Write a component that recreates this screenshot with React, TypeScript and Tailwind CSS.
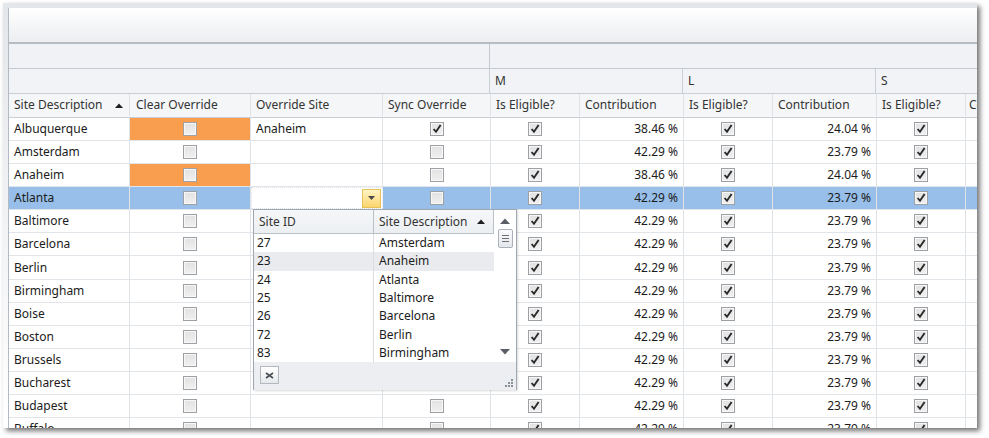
import { ReactNode } from 'react'

interface Row {
  site: string
  orange?: boolean
  override?: string
  sync?: boolean
  m: string
  l: string
}

const rows: Row[] = [
  { site: 'Albuquerque', orange: true, override: 'Anaheim', sync: true, m: '38.46 %', l: '24.04 %' },
  { site: 'Amsterdam', m: '42.29 %', l: '23.79 %' },
  { site: 'Anaheim', orange: true, m: '38.46 %', l: '24.04 %' },
  { site: 'Atlanta', m: '42.29 %', l: '23.79 %' },
  { site: 'Baltimore', m: '42.29 %', l: '23.79 %' },
  { site: 'Barcelona', m: '42.29 %', l: '23.79 %' },
  { site: 'Berlin', m: '42.29 %', l: '23.79 %' },
  { site: 'Birmingham', m: '42.29 %', l: '23.79 %' },
  { site: 'Boise', m: '42.29 %', l: '23.79 %' },
  { site: 'Boston', m: '42.29 %', l: '23.79 %' },
  { site: 'Brussels', m: '42.29 %', l: '23.79 %' },
  { site: 'Bucharest', m: '42.29 %', l: '23.79 %' },
  { site: 'Budapest', m: '42.29 %', l: '23.79 %' },
  { site: 'Buffalo', m: '42.29 %', l: '23.79 %' },
]

const lookup = [
  ['27', 'Amsterdam'],
  ['23', 'Anaheim'],
  ['24', 'Atlanta'],
  ['25', 'Baltimore'],
  ['26', 'Barcelona'],
  ['72', 'Berlin'],
  ['83', 'Birmingham'],
]

function Check({ checked }: { checked?: boolean }) {
  return (
    <span className="flex h-[14px] w-[14px] items-center justify-center border border-[#9da1a6] bg-gradient-to-b from-[#e2e2e2] to-[#f0f0f0] shadow-[inset_0_0_0_1px_#f7f7f7]">
      {checked && (
        <svg width="12" height="12" viewBox="0 0 12 12">
          <path d="M2.6 6 L5 8.8 L9.6 2" fill="none" stroke="#2a2a2a" strokeWidth="1.9" />
        </svg>
      )}
    </span>
  )
}

function SortUp() {
  return (
    <svg width="8" height="5" viewBox="0 0 8 5">
      <path d="M0 5 L4 0.5 L8 5 Z" fill="#1f1f1f" />
    </svg>
  )
}

function Cell({ w, children, className = '' }: { w: string; children?: ReactNode; className?: string }) {
  return (
    <div className={`flex h-full shrink-0 items-center border-r border-[#dfe3e7] ${w} ${className}`}>
      {children}
    </div>
  )
}

export default function App() {
  return (
    <div className="h-[438px] w-[989px] overflow-hidden bg-white font-['Noto_Sans',sans-serif] text-[12px] leading-none">
      <div className="ml-[3px] mt-[3px] h-[425px] w-[974px] bg-gradient-to-b from-[#e3e6ea] via-[#f1f2f4] to-white pl-[5px] pt-[5px] shadow-[3px_3px_5px_rgba(0,0,0,0.55)]">
        <div className="relative h-[420px] w-[969px] overflow-hidden border-l border-[#b3bac2] bg-white">
          {/* top bands */}
          <div className="h-[36px] border-b-2 border-[#b6bdc4] bg-gradient-to-b from-white to-[#eceef1]" />
          <div className="flex h-[25px] border-b border-[#c4cad0] bg-[#f0f2f5]">
            <div className="w-[481px] shrink-0 border-r border-[#c4cad0]" />
            <div className="flex-1" />
          </div>
          <div className="flex h-[25px] border-b border-[#c9cfd5] bg-[#f1f3f6] text-[#333]">
            <div className="w-[481px] shrink-0 border-r border-[#c9cfd5]" />
            <div className="flex w-[193px] shrink-0 items-center border-r border-[#c9cfd5] pl-[5px]">M</div>
            <div className="flex w-[193px] shrink-0 items-center border-r border-[#c9cfd5] pl-[5px]">L</div>
            <div className="flex flex-1 items-center pl-[5px]">S</div>
          </div>
          {/* column headers */}
          <div className="flex h-[24px] border-b border-[#c9cfd5] bg-[#f5f6f8] pb-[1px] text-[#333]">
            <Cell w="w-[121px]" className="justify-between border-[#cdd2d8] pl-[5px] pr-[6px]">
              <span>Site Description</span>
              <SortUp />
            </Cell>
            <Cell w="w-[121px]" className="border-[#cdd2d8] pl-[6px]">Clear Override</Cell>
            <Cell w="w-[132px]" className="border-[#cdd2d8] pl-[5px]">Override Site</Cell>
            <Cell w="w-[108px]" className="border-[#cdd2d8] pl-[5px]">Sync Override</Cell>
            <Cell w="w-[89px]" className="border-[#cdd2d8] pl-[5px]">Is Eligible?</Cell>
            <Cell w="w-[104px]" className="border-[#cdd2d8] pl-[5px]">Contribution</Cell>
            <Cell w="w-[89px]" className="border-[#cdd2d8] pl-[5px]">Is Eligible?</Cell>
            <Cell w="w-[104px]" className="border-[#cdd2d8] pl-[5px]">Contribution</Cell>
            <Cell w="w-[89px]" className="border-[#cdd2d8] pl-[5px]">Is Eligible?</Cell>
            <Cell w="w-[40px]" className="border-[#cdd2d8] pl-[3px]">Contribution</Cell>
          </div>
          {/* data rows */}
          {rows.map((r) => {
            const selected = r.site === 'Atlanta'
            return (
              <div
                key={r.site}
                className={`flex h-[23.08px] border-b border-[#e1e4e8] text-[#1b1b1b] ${selected ? 'bg-[#97bfe9]' : 'bg-white'}`}
              >
                <Cell w="w-[121px]" className="pl-[5px]">{r.site}</Cell>
                <Cell w="w-[121px]" className={`justify-center ${r.orange ? 'bg-[#f99d4f]' : ''}`}>
                  <Check />
                </Cell>
                {selected ? (
                  <Cell w="w-[132px]" className="justify-end border border-dotted border-[#4a4a4a] bg-white pr-[1px]">
                    <span className="flex h-[19px] w-[19px] items-center justify-center border border-[#e7c15a] bg-gradient-to-b from-[#fff4c2] to-[#fcd56c]">
                      <svg width="7" height="4" viewBox="0 0 7 4">
                        <path d="M0 0 L7 0 L3.5 4 Z" fill="#4a4a4a" />
                      </svg>
                    </span>
                  </Cell>
                ) : (
                  <Cell w="w-[132px]" className="pl-[5px]">{r.override}</Cell>
                )}
                <Cell w="w-[108px]" className="justify-center">
                  <Check checked={r.sync} />
                </Cell>
                <Cell w="w-[89px]" className="justify-center">
                  <Check checked />
                </Cell>
                <Cell w="w-[104px]" className="justify-end pr-[5px]">{r.m}</Cell>
                <Cell w="w-[89px]" className="justify-center">
                  <Check checked />
                </Cell>
                <Cell w="w-[104px]" className="justify-end pr-[5px]">{r.l}</Cell>
                <Cell w="w-[89px]" className="justify-center">
                  <Check checked />
                </Cell>
                <Cell w="w-[40px]" />
              </div>
            )
          })}

          {/* lookup popup */}
          <div className="absolute left-[244px] top-[201px] flex h-[181px] w-[264px] flex-col border border-[#9fa7b0] bg-white text-[#1b1b1b] shadow-[1px_1px_2px_rgba(0,0,0,0.15)]">
            <div className="flex flex-1">
              <div className="flex w-[240px] flex-col">
                <div className="flex h-[24px] shrink-0 border-b border-[#b9c0c7] bg-gradient-to-b from-[#f6f7f9] to-[#eceff2] text-[#333]">
                  <div className="flex w-[120px] items-center border-r border-[#b9c0c7] pl-[5px]">Site ID</div>
                  <div className="flex flex-1 items-center justify-between border-r border-[#b9c0c7] pl-[5px] pr-[8px]">
                    <span>Site Description</span>
                    <SortUp />
                  </div>
                </div>
                {lookup.map(([id, name]) => (
                  <div key={id} className={`flex h-[18.3px] ${name === 'Anaheim' ? 'bg-[#e9ebee]' : ''}`}>
                    <div className="flex w-[120px] items-center border-r border-[#dadde1] pl-[3px]">{id}</div>
                    <div className="flex flex-1 items-center pl-[5px]">{name}</div>
                  </div>
                ))}
              </div>
              <div className="flex w-[22px] flex-col items-center pt-[8px]">
                <svg width="10" height="6" viewBox="0 0 10 6">
                  <path d="M0 6 L5 0.5 L10 6 Z" fill="#5a5f66" />
                </svg>
                <div className="mt-[5px] flex h-[19px] w-[15px] flex-col items-center justify-center gap-[2px] rounded-[2px] border border-[#a9b0b8] bg-gradient-to-b from-[#fbfbfc] to-[#e4e7eb]">
                  <span className="h-px w-[7px] bg-[#6b7077]" />
                  <span className="h-px w-[7px] bg-[#6b7077]" />
                  <span className="h-px w-[7px] bg-[#6b7077]" />
                </div>
                <div className="flex-1" />
                <svg width="10" height="6" viewBox="0 0 10 6" className="mb-[7px]">
                  <path d="M0 0 L10 0 L5 5.5 Z" fill="#5a5f66" />
                </svg>
              </div>
            </div>
            <div className="flex h-[28px] shrink-0 items-start justify-between bg-[#eceef1] pl-[6px] pr-[2px] pt-[4px]">
              <span className="flex h-[18px] w-[19px] items-center justify-center border border-[#b3b8be] bg-gradient-to-b from-white to-[#e6e8eb]">
                <svg width="9" height="7" viewBox="0 0 9 7">
                  <path d="M1 1 L8 6 M8 1 L1 6" stroke="#4a4f55" strokeWidth="1.6" />
                </svg>
              </span>
              <svg width="10" height="10" viewBox="0 0 10 10" className="mt-[12px]">
                <rect x="7" y="1" width="2" height="2" fill="#8a9097" />
                <rect x="4" y="4" width="2" height="2" fill="#8a9097" />
                <rect x="7" y="4" width="2" height="2" fill="#8a9097" />
                <rect x="1" y="7" width="2" height="2" fill="#8a9097" />
                <rect x="4" y="7" width="2" height="2" fill="#8a9097" />
                <rect x="7" y="7" width="2" height="2" fill="#8a9097" />
              </svg>
            </div>
          </div>
        </div>
      </div>
    </div>
  )
}
